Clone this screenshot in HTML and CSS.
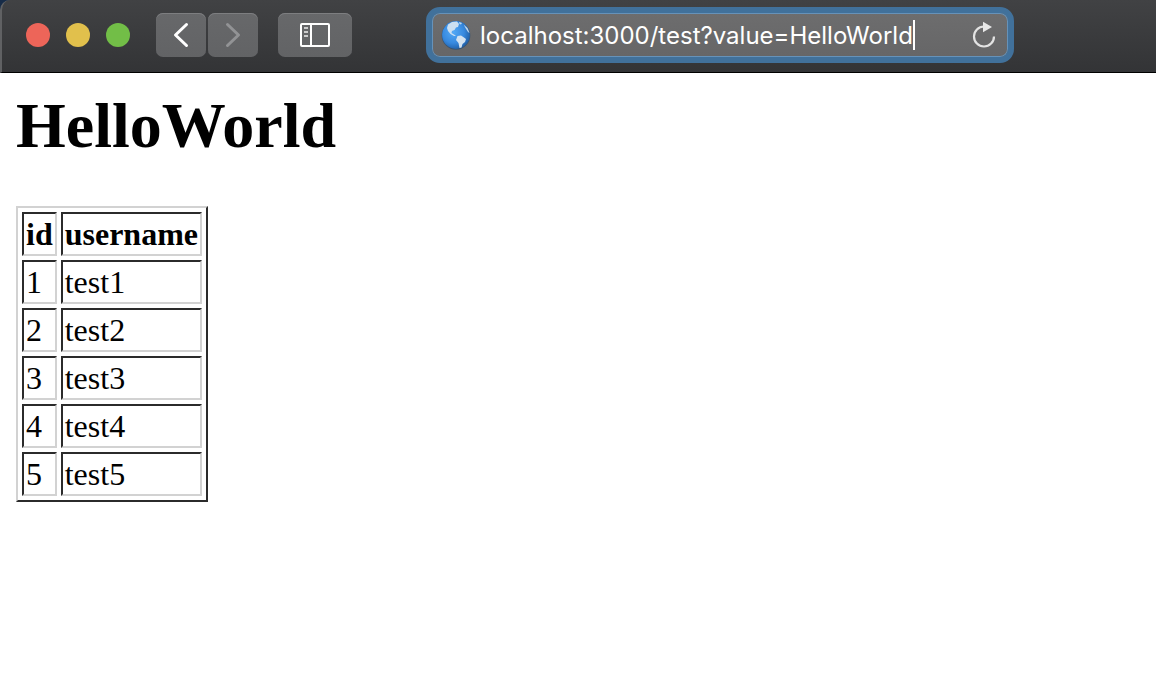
FILE: index.html
```html
<!DOCTYPE html>
<html lang="en">
<head>
<meta charset="utf-8">
<title>HelloWorld</title>
<link rel="stylesheet" href="styles.css">
</head>
<body>
<header class="toolbar">
  <div class="window-controls">
    <button class="dot dot-close" aria-label="Close"></button>
    <button class="dot dot-minimize" aria-label="Minimize"></button>
    <button class="dot dot-zoom" aria-label="Zoom"></button>
  </div>
  <nav class="history">
    <button class="tool" aria-label="Back">
      <svg width="50" height="44" viewBox="0 0 50 44" fill="none" stroke="#fff" stroke-width="3" stroke-linecap="round" stroke-linejoin="round"><path d="M30.500 11.500L19.500 22L30.500 32.500"/></svg>
    </button>
    <button class="tool" aria-label="Forward" disabled>
      <svg width="50" height="44" viewBox="0 0 50 44" fill="none" stroke="#929395" stroke-width="3" stroke-linecap="round" stroke-linejoin="round"><path d="M19.500 11.500L30.500 22L19.500 32.500"/></svg>
    </button>
  </nav>
  <button class="tool tool-wide" aria-label="Show sidebar">
    <svg width="30" height="24" viewBox="0 0 30 24" fill="none"><rect x="1" y="1" width="28" height="22" rx="1" stroke="#fff" stroke-width="2"/><path d="M11 1V23" stroke="#fff" stroke-width="2"/><path d="M4 5H8M4 9H8M4 13H8" stroke="#ccc" stroke-width="2"/></svg>
  </button>
  <div class="address">
    <svg class="globe" width="30" height="30" viewBox="0 0 30 30">
      <defs>
        <radialGradient id="sea" cx=".4" cy=".4" r=".65"><stop offset="0" stop-color="#53a9f6"/><stop offset=".6" stop-color="#3789df"/><stop offset="1" stop-color="#205da3"/></radialGradient>
      </defs>
      <circle cx="15" cy="15.500" r="14.300" fill="#39536f"/>
      <circle cx="15" cy="15" r="13.900" fill="url(#sea)"/>
      <path d="M7 4.500L11 2L16 1.500L18 4L17 7L15 7.500L13.500 10L11 11L10.500 13L13 14.500L15 16L13 16L9.500 14L7 11L6 8Z" fill="#cbdff1"/>
      <path d="M16.500 16L20 15.500L23 17.500L25 19L24 22L21.500 24L20.500 27.500L18.500 28L17.500 23L15 20Z" fill="#d3e2f0"/>
      <path d="M22.500 4.500L26.500 8L28.500 13L27 12L24.500 8Z" fill="#c6d9ea"/>
      <path d="M18 2L21 3L20 4.500L18.500 4Z" fill="#b9d7f1"/>
    </svg>
    <input class="url" type="text" aria-label="Address" value="localhost:3000/test?value=HelloWorld" spellcheck="false">
    <span class="caret"></span>
    <button class="reload" aria-label="Reload">
      <svg width="24" height="28" viewBox="0 0 24 28"><path d="M12 5.500A10 10 0 1 0 22 15.500" fill="none" stroke="#e3e3e3" stroke-width="2.200"/><path d="M11 .8L20 6L11 11.300Z" fill="#e8e8e8"/></svg>
    </button>
  </div>
</header>
<main class="page">
  <h1 class="title">HelloWorld</h1>
  <table class="users">
    <thead><tr><th>id</th><th>username</th></tr></thead>
    <tbody>
      <tr><td>1</td><td>test1</td></tr>
      <tr><td>2</td><td>test2</td></tr>
      <tr><td>3</td><td>test3</td></tr>
      <tr><td>4</td><td>test4</td></tr>
      <tr><td>5</td><td>test5</td></tr>
    </tbody>
  </table>
</main>
</body>
</html>
```
FILE: styles.css
```css
* {
  box-sizing: border-box;
}

body {
  margin: 0;
  background: linear-gradient(#172c48, #172c48) 0 0 / 100% 12px no-repeat #fff;
}

button {
  margin: 0;
  padding: 0;
  border: 0;
  background: none;
}

svg {
  display: block;
}

.toolbar {
  display: flex;
  align-items: center;
  height: 73px;
  padding: 0 142px 2px 24px;
  border-left: 2px solid #606163;
  border-bottom: 1px solid #000;
  border-top-left-radius: 10px;
  background: linear-gradient(#414244, #333436);
}

.window-controls {
  display: flex;
  gap: 16px;
}

.dot {
  width: 24px;
  height: 24px;
  border-radius: 50%;
}

.dot-close {
  background: #ed6559;
}

.dot-minimize {
  background: #e1c04c;
}

.dot-zoom {
  background: #72be47;
}

.history {
  display: flex;
  gap: 2px;
  margin-left: 26px;
}

.tool {
  display: flex;
  align-items: center;
  justify-content: center;
  width: 50px;
  height: 44px;
  border-radius: 7px;
  background: linear-gradient(#67686a, #626365);
  box-shadow: inset 0 1px #7d7e80;
}

.tool-wide {
  width: 74px;
  margin-left: 20px;
}

.address {
  display: flex;
  flex: 1;
  align-items: center;
  min-width: 0;
  height: 56px;
  margin-left: 74px;
  padding: 0 12px 0 9px;
  border: 6px solid #41719b;
  border-radius: 14px;
  background: linear-gradient(#6d6d6e, #666667);
  box-shadow: inset 0 0 0 1px #6692b9;
}

.globe {
  flex: none;
}

.url {
  field-sizing: content;
  min-width: 0;
  height: 36px;
  margin-left: 9px;
  padding: 0;
  border: 0;
  outline: 0;
  background: none;
  color: #fff;
  font: 24px Inter, "Liberation Sans", sans-serif;
}

.caret {
  flex: none;
  width: 2px;
  height: 30px;
  background: #fff;
}

.reload {
  flex: none;
  margin-left: auto;
}

.page {
  padding: 16px;
  background: #fff;
  color: #000;
  font-family: "Liberation Serif", "Times New Roman", serif;
}

.title {
  margin: 0 0 44px;
  font-size: 64px;
  line-height: 73px;
}

.users {
  border: 2px solid;
  border-color: #d2d2d2 #2b2b2b #2b2b2b #d2d2d2;
  border-spacing: 4px;
  font-size: 32px;
  line-height: 36px;
}

.users th,
.users td {
  padding: 2px;
  border: 2px solid;
  border-color: #2b2b2b #d2d2d2 #d2d2d2 #2b2b2b;
  text-align: left;
}
```
